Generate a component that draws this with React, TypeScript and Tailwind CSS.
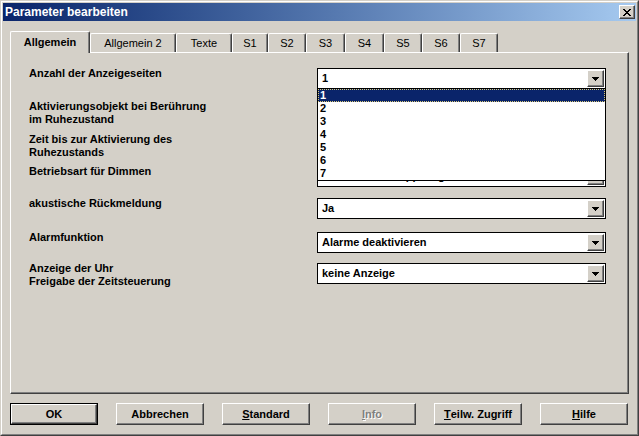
import React from "react";

const TABS = [
  { label: "Allgemein", w: "w-[80px]", active: true },
  { label: "Allgemein 2", w: "w-[86px]" },
  { label: "Texte", w: "w-[56px]" },
  { label: "S1", w: "w-[36px]" },
  { label: "S2", w: "w-[38px]" },
  { label: "S3", w: "w-[39px]" },
  { label: "S4", w: "w-[39px]" },
  { label: "S5", w: "w-[38px]" },
  { label: "S6", w: "w-[38px]" },
  { label: "S7", w: "w-[38px]" },
];

// rows 2-3 sit fully under the open list, so their values are not shown
const ROWS: { label: string[]; value: string; h: string; open?: boolean }[] = [
  { label: ["Anzahl der Anzeigeseiten"], value: "1", h: "h-[33px]", open: true },
  { label: ["Aktivierungsobjekt bei Berührung", "im Ruhezustand"], value: "", h: "h-[33px]" },
  { label: ["Zeit bis zur Aktivierung des", "Ruhezustands"], value: "", h: "h-[32px]" },
  { label: ["Betriebsart für Dimmen"], value: "Dimmen mit Stopptelegramm", h: "h-[32px]" },
  { label: ["akustische Rückmeldung"], value: "Ja", h: "h-[34px]" },
  { label: ["Alarmfunktion"], value: "Alarme deaktivieren", h: "h-[31px]" },
  { label: ["Anzeige der Uhr", "Freigabe der Zeitsteuerung"], value: "keine Anzeige", h: "h-[31px]" },
];

// 8x7 pixel close glyph
const CLOSE_PX: [number, number, number][] = [
  [0, 0, 2], [6, 0, 2],
  [1, 1, 2], [5, 1, 2],
  [2, 2, 4],
  [3, 3, 2],
  [2, 4, 4],
  [1, 5, 2], [5, 5, 2],
  [0, 6, 2], [6, 6, 2],
];

const raised =
  "border border-t-white border-l-white border-r-[#404040] border-b-[#404040] shadow-[inset_-1px_-1px_#808080]";

function Arrow() {
  return (
    <svg width="7" height="4" shapeRendering="crispEdges">
      <path d="M0 0h7v1h-1v1h-1v1h-1v1h-1v-1h-1v-1h-1v-1h-1z" fill="#000" />
    </svg>
  );
}

function Combo({ value, open }: { value: string; open?: boolean }) {
  return (
    <div className="relative w-[289px]">
      <div className="flex h-[21px] items-center border border-black bg-white">
        <span className="flex-1 truncate pl-[4px] text-[11px] font-bold leading-[13px] text-black">{value}</span>
        <span className={`mr-[1px] flex h-[17px] w-[17px] items-center justify-center bg-[#d4d0c8] ${raised}`}>
          <Arrow />
        </span>
      </div>
      {open && (
        <ul className="absolute left-0 top-full z-20 w-full border border-t-0 border-black bg-white">
          {["1", "2", "3", "4", "5", "6", "7"].map((n, i) => (
            <li
              key={n}
              className={
                "h-[13px] pl-[2px] text-[11px] font-bold leading-[13px] " +
                (i === 0
                  ? "bg-[#0a246a] text-white outline outline-1 outline-dotted outline-[#d8c878] -outline-offset-1"
                  : "text-black")
              }
            >
              {n}
            </li>
          ))}
        </ul>
      )}
    </div>
  );
}

function Btn({ children, def, disabled }: { children: React.ReactNode; def?: boolean; disabled?: boolean }) {
  const inner = (
    <div
      className={`flex h-full w-full items-center justify-center bg-[#d4d0c8] text-[11px] font-bold ${raised} ${
        disabled ? "text-[#808080] [text-shadow:1px_1px_0_#fff]" : "text-black"
      }`}
    >
      {children}
    </div>
  );
  if (def) return <div className="h-[22px] w-[88px] border border-black">{inner}</div>;
  return <div className="h-[22px] w-[88px]">{inner}</div>;
}

export default function App() {
  return (
    <div className="h-[436px] w-[639px] border border-t-[#d4d0c8] border-l-[#d4d0c8] border-r-[#404040] border-b-[#404040] bg-[#d4d0c8] font-['Liberation_Sans',Arial,sans-serif]">
      <div className="flex h-full flex-col border border-t-white border-l-white border-r-[#808080] border-b-[#808080] p-[1px]">
        {/* Title bar */}
        <div className="flex h-[18px] items-center bg-linear-to-r from-[#0a246a] to-[#a6caf0] pl-[2px] pr-[1px]">
          <span className="flex-1 text-[12px] font-bold text-white">Parameter bearbeiten</span>
          <span className={`flex h-[14px] w-[16px] items-center justify-center bg-[#d4d0c8] ${raised}`}>
            <svg width="8" height="7" shapeRendering="crispEdges">
              {CLOSE_PX.map(([x, y, w], i) => (
                <rect key={i} x={x} y={y} width={w} height={1} fill="#000" />
              ))}
            </svg>
          </span>
        </div>

        <div className="pl-[7px] pt-[10px]">
          {/* Tabs */}
          <div className="flex h-[21px] items-end">
            {TABS.map((t) => (
              <div
                key={t.label}
                className={
                  `flex items-center justify-center rounded-t-[2px] border-t border-l border-r border-t-white border-l-white border-r-[#404040] bg-[#d4d0c8] shadow-[inset_-1px_0_#808080] text-[11px] text-black ${t.w} ` +
                  (t.active ? "relative z-10 -mb-[1px] h-[22px] font-bold" : "h-[19px]")
                }
              >
                {t.label}
              </div>
            ))}
          </div>

          {/* Panel */}
          <div className="relative h-[342px] w-[619px] border border-t-white border-l-white border-r-[#404040] border-b-[#404040] pl-[18px] pt-[14px] shadow-[inset_-1px_-1px_#808080]">
            {ROWS.map((r) => (
              <div key={r.label[0]} className={`flex items-start ${r.h}`}>
                <div className="w-[288px] text-[11px] font-bold leading-[13px] text-black">
                  {r.label.map((l) => (
                    <div key={l}>{l}</div>
                  ))}
                </div>
                <div className="pt-[1px]">
                  <Combo value={r.value} open={r.open} />
                </div>
              </div>
            ))}
          </div>

          {/* Buttons */}
          <div className="mt-[9px] flex gap-[18px]">
            <Btn def>OK</Btn>
            <Btn>Abbrechen</Btn>
            <Btn>
              <span className="underline">S</span>tandard
            </Btn>
            <Btn disabled>
              <span className="underline">I</span>nfo
            </Btn>
            <Btn>
              <span className="underline">T</span>eilw. Zugriff
            </Btn>
            <Btn>
              <span className="underline">H</span>ilfe
            </Btn>
          </div>
        </div>
      </div>
    </div>
  );
}
